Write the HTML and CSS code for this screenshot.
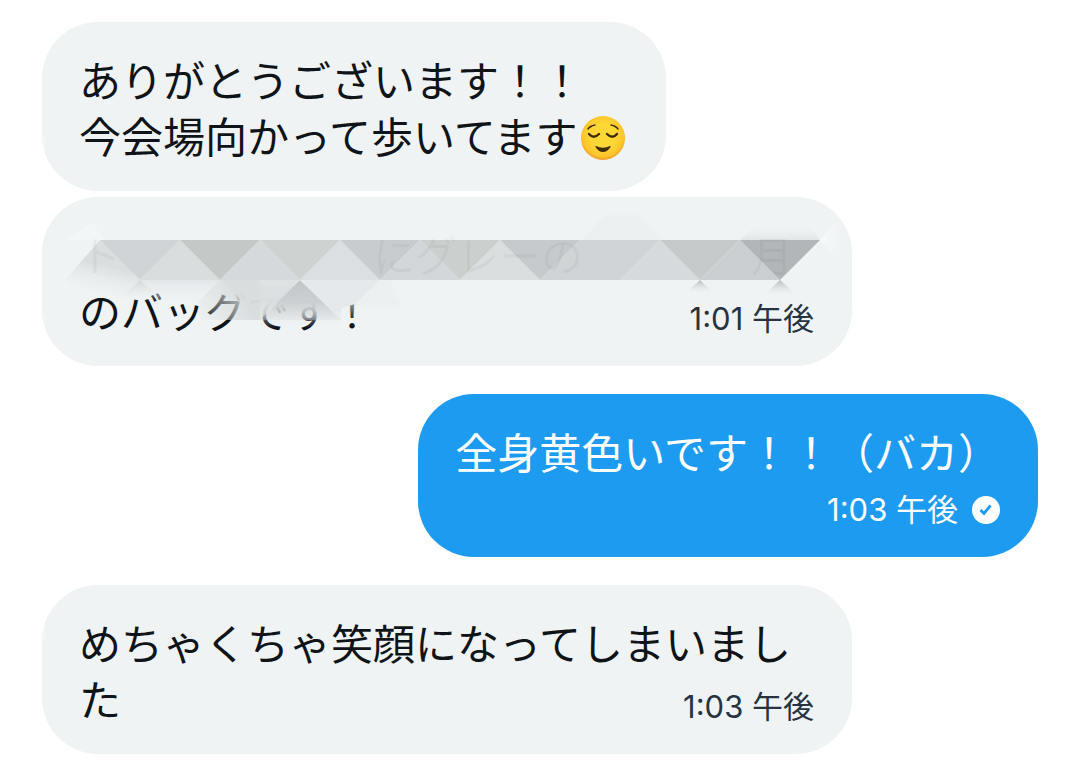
FILE: index.html
```html
<!DOCTYPE html>
<html lang="ja">
<head>
  <meta charset="UTF-8" />
  <meta name="viewport" content="width=device-width, initial-scale=1.0"/>
  <title>メッセージ</title>
  <link rel="stylesheet" href="styles.css">
</head>
<body>
  <main class="chat">
    <div class="message">
      <p>ありがとうございます！！<br>今会場向かって歩いてます<svg class="emoji" viewBox="0 0 46 46" role="img" aria-label="ほっとした顔">
        <defs>
          <radialGradient id="face" cx="50%" cy="45%" r="55%">
            <stop offset="0.5" stop-color="#fdd835"/>
            <stop offset="0.85" stop-color="#fbc52b"/>
            <stop offset="1" stop-color="#f09a24"/>
          </radialGradient>
        </defs>
        <circle cx="23" cy="23" r="22" fill="url(#face)"/>
        <g fill="none" stroke="#422b0d" stroke-linecap="round">
          <path d="M8 14q2-3 7-4M38 14q-2-3-7-4" stroke-width="1.4"/>
          <path d="M9 19q4.500 5.500 10 0M27 19q5.500 5.500 10 0" stroke-width="2.400"/>
        </g>
        <path d="M16 31q7 3.500 14 0q1 0 .5 1q-3 5-7.500 5t-7.500-5q-.5-1 .5-1z" fill="#422b0d"/>
      </svg></p>
    </div>

    <div class="message">
      <p><span class="faded">ト　　　　　　にグレーの　　　　月</span>のバッグです！<time class="inline-time">1:01 午後</time></p>
      <svg class="mosaic" viewBox="42 197 810 169" preserveAspectRatio="none" aria-hidden="true">
        <defs>
          <linearGradient id="fadeDown" x1="0" y1="0" x2="0" y2="1">
            <stop offset="0" stop-color="#d0d5d6"/>
            <stop offset="1" stop-color="#eff3f4" stop-opacity="0"/>
          </linearGradient>
          <linearGradient id="fadeDark" x1="0" y1="0" x2="0" y2="1">
            <stop offset="0" stop-color="#b4b8ba"/>
            <stop offset="1" stop-color="#eff3f4" stop-opacity="0"/>
          </linearGradient>
          <linearGradient id="fadeUp" x1="0" y1="1" x2="0" y2="0">
            <stop offset="0" stop-color="#e1e5e6"/>
            <stop offset="1" stop-color="#eff3f4" stop-opacity="0"/>
          </linearGradient>
          <linearGradient id="glow" x1="0" y1="0" x2="1" y2="0">
            <stop offset="0" stop-color="#f9fbfb"/>
            <stop offset="1" stop-color="#eff3f4" stop-opacity="0"/>
          </linearGradient>
          <linearGradient id="bandLeft" gradientUnits="userSpaceOnUse" x1="82" y1="260" x2="74" y2="294">
            <stop offset="0" stop-color="#dadedf"/>
            <stop offset="1" stop-color="#eff3f4" stop-opacity="0"/>
          </linearGradient>
          <linearGradient id="under" gradientUnits="userSpaceOnUse" x1="0" y1="280" x2="0" y2="304">
            <stop offset="0" stop-color="#e1e5e7"/>
            <stop offset="1" stop-color="#eff3f4" stop-opacity="0"/>
          </linearGradient>
          <linearGradient id="veil" gradientUnits="userSpaceOnUse" x1="0" y1="280" x2="0" y2="328">
            <stop offset="0" stop-color="#dcdfe1"/>
            <stop offset="0.450" stop-color="#dcdfe1" stop-opacity="0.950"/>
            <stop offset="1" stop-color="#e8ecee" stop-opacity="0"/>
          </linearGradient>
          <linearGradient id="veilSoft" gradientUnits="userSpaceOnUse" x1="0" y1="290" x2="0" y2="322">
            <stop offset="0" stop-color="#ecf0f1"/>
            <stop offset="1" stop-color="#eff3f4" stop-opacity="0"/>
          </linearGradient>
          <linearGradient id="veilLeft" gradientUnits="userSpaceOnUse" x1="200" y1="328" x2="244" y2="300">
            <stop offset="0" stop-color="#d4d7d9" stop-opacity="0"/>
            <stop offset="1" stop-color="#d7dadc" stop-opacity="0.850"/>
          </linearGradient>
          <linearGradient id="grayDown" gradientUnits="userSpaceOnUse" x1="0" y1="280" x2="0" y2="324">
            <stop offset="0" stop-color="#c2c5c7"/>
            <stop offset="0.500" stop-color="#cbced0" stop-opacity="0.900"/>
            <stop offset="1" stop-color="#d8dcde" stop-opacity="0.200"/>
          </linearGradient>
        </defs>

        <!-- soft edges around the band -->
        <path d="M66 240L92 222L104 240z" fill="#f2f6f7"/>
        <path d="M582 240L605 215H640L665 240z" fill="#ecf0f1"/>
        <path d="M740 240L758 223H808L820 240z" fill="url(#fadeUp)"/>
        <path d="M820 240L838 220L848 268z" fill="url(#glow)"/>

        <!-- lower row -->
        <path d="M65 280L100 240L140 280L128 298H74z" fill="url(#bandLeft)"/>
        <path d="M118 302L140 280L166 302z" fill="url(#fadeDown)"/>
        <path d="M140 280H220L198 304H164z" fill="url(#under)"/>
        <path d="M330 280H390L410 322H330z" fill="url(#veilSoft)"/>
        <path d="M198 302L220 280H260V320H200z" fill="url(#veilLeft)"/>
        <path d="M220 280H300L260 320z" fill="#d9dddd" opacity="0.800"/>
        <path d="M260 286H341V328H260z" fill="url(#veil)"/>
        <path d="M260 320L300 280L341 320z" fill="url(#grayDown)"/>
        <path d="M300 280H380L355 304L332 311z" fill="#e5e9ec"/>
        <path d="M380 280L402 306H355z" fill="#eceff1" opacity="0.700"/>
        <path d="M685 294L700 280L714 294z" fill="url(#fadeDark)"/>
        <path d="M763 296L780 280L798 296z" fill="url(#fadeDark)"/>

        <!-- band -->
        <path d="M100 240H180L140 280z" fill="#d0d4d6"/>
        <path d="M180 240L220 280H140z" fill="#d9dddd"/>
        <path d="M180 240H260L220 280z" fill="#c4c8c7"/>
        <path d="M260 240L300 280H220z" fill="#d5d9dc"/>
        <path d="M260 240H340L300 280z" fill="#ced3d1"/>
        <path d="M340 240L380 280H300z" fill="#dbdfe1"/>
        <path d="M340 240H420L380 280z" fill="#c8ccce"/>
        <path d="M420 240L460 280H380z" fill="#d3d7d9"/>
        <path d="M420 240H500L460 280z" fill="#cbd0cf"/>
        <path d="M500 240L540 280H460z" fill="#dadedf"/>
        <path d="M500 240H580L540 280z" fill="#c6cacc"/>
        <path d="M580 240H660L620 280H540z" fill="#d0d4d6"/>
        <path d="M660 240L700 280H620z" fill="#d6dadd"/>
        <path d="M660 240H740L700 280z" fill="#c6cacb"/>
        <path d="M740 240L780 280H700z" fill="#cbcfd1"/>
        <path d="M740 240H820L780 280z" fill="#b2b6b8"/>
      </svg>
    </div>

    <div class="message sent">
      <p>全身黄色いです！！（バカ）</p>
      <div class="status">
        <time>1:03 午後</time>
        <svg class="check" viewBox="0 0 28 28" role="img" aria-label="送信済み">
          <circle cx="14" cy="14" r="14" fill="#fff"/>
          <path d="M8.500 14L12 17.500L18.500 9.500" fill="none" stroke="#1d9bf0" stroke-width="2.800"/>
        </svg>
      </div>
    </div>

    <div class="message">
      <p><span>めちゃくちゃ笑顔になってしまいまし</span>た<time class="inline-time">1:03 午後</time></p>
    </div>
  </main>
</body>
</html>
```
FILE: styles.css
```css
body {
  margin: 0;
  background-color: #ffffff;
  color: #0f1419;
  font-family: "Noto Sans CJK JP", sans-serif;
}

.chat {
  display: flex;
  flex-direction: column;
  align-items: flex-start;
  padding: 22px 42px 24px;
}

.message {
  position: relative;
  box-sizing: border-box;
  max-width: 75vw;
  margin-bottom: 28px;
  padding: 29px 38px 28px 37px;
  border-radius: 56px;
  background-color: #eff3f4;
}

.message:first-child {
  margin-bottom: 6px;
}

.message:last-child {
  margin-bottom: 0;
}

.message p {
  margin: 0;
  font-size: 42px;
  line-height: 56px;
}

.sent {
  align-self: flex-end;
  background-color: #1d9bf0;
  color: #ffffff;
}

time {
  font-family: Inter, "Noto Sans CJK JP", sans-serif;
  font-size: 31px;
  line-height: 38px;
}

.inline-time {
  float: right;
  margin-top: 18px;
  color: #273340;
}

.status {
  display: flex;
  align-items: center;
  justify-content: flex-end;
  gap: 14px;
  margin-top: 12px;
}

.check {
  width: 28px;
  height: 28px;
}

.emoji {
  width: 46px;
  height: 46px;
  margin: 0 2px;
  vertical-align: -8px;
}

/* pixelated strip over the hidden words */
.mosaic {
  position: absolute;
  top: 0;
  left: 0;
  width: 100%;
  height: 100%;
}

.faded {
  position: relative;
  z-index: 1;
  color: rgba(70, 80, 85, 0.06);
}
```
